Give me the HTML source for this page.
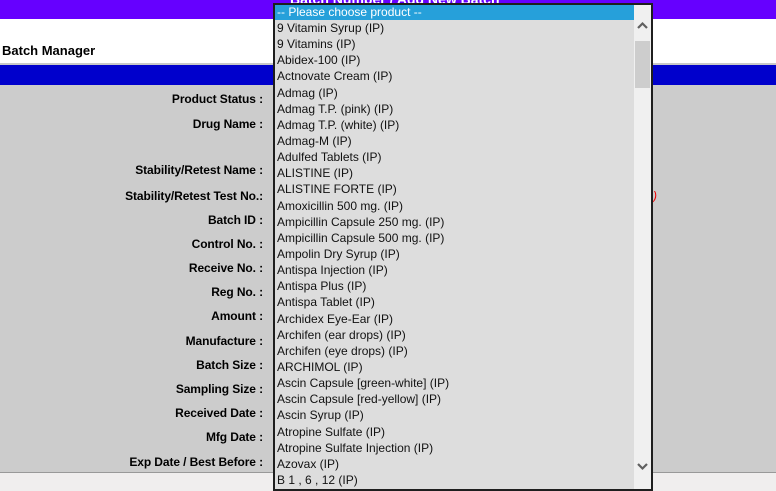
<!DOCTYPE html>
<html><head><style>
body{margin:0;width:776px;height:491px;overflow:hidden;background:#ccc;font-family:"Liberation Sans",Arial,sans-serif;position:relative}
.a{position:absolute}
.lbl{position:absolute;right:513px;font-size:12px;font-weight:bold;color:#000;white-space:nowrap;line-height:14px;letter-spacing:-0.1px}
.dd{position:absolute;left:273px;top:3px;width:376px;height:484px;border:2px solid #1e1e1e;background:#ddd;overflow:hidden}
.it{height:16.15px;line-height:17px;font-size:12px;padding-left:2px;color:#111;white-space:nowrap}
</style></head><body>
<div class="a" style="left:0;top:0;width:776px;height:19px;background:#6600ff"></div>
<div class="a" style="left:290px;top:-9px;color:#fff;font-weight:bold;font-size:14px">Batch Number / Add New Batch</div>
<div class="a" style="left:0;top:19px;width:776px;height:44px;background:#fff"></div>
<div class="a" style="left:2px;top:43px;font-size:13px;font-weight:bold">Batch Manager</div>
<div class="a" style="left:0;top:63px;width:776px;height:2px;background:#c8c8c8"></div>
<div class="a" style="left:0;top:65px;width:776px;height:20px;background:#0000cc"></div>
<div class="a" style="left:0;top:472px;width:776px;height:1px;background:#999"></div>
<div class="a" style="left:0;top:473px;width:776px;height:18px;background:#f0eeee"></div>
<div class="a" style="left:653px;top:189px;color:#e00;font-size:12px;font-style:italic">)</div>
<div class="lbl" style="top:92px">Product Status :</div>
<div class="lbl" style="top:117px">Drug Name :</div>
<div class="lbl" style="top:163px">Stability/Retest Name :</div>
<div class="lbl" style="top:189px">Stability/Retest Test No.:</div>
<div class="lbl" style="top:213px">Batch ID :</div>
<div class="lbl" style="top:237px">Control No. :</div>
<div class="lbl" style="top:261px">Receive No. :</div>
<div class="lbl" style="top:285px">Reg No. :</div>
<div class="lbl" style="top:309px">Amount :</div>
<div class="lbl" style="top:334px">Manufacture :</div>
<div class="lbl" style="top:358px">Batch Size :</div>
<div class="lbl" style="top:382px">Sampling Size :</div>
<div class="lbl" style="top:406px">Received Date :</div>
<div class="lbl" style="top:430px">Mfg Date :</div>
<div class="lbl" style="top:455px">Exp Date / Best Before :</div>
<div class="dd">
<div style="width:359px">
<div class="it" style="background:#26a0da;color:#fff;height:15px;line-height:15px">-- Please choose product --</div>
<div class="it">9 Vitamin Syrup (IP)</div>
<div class="it">9 Vitamins (IP)</div>
<div class="it">Abidex-100 (IP)</div>
<div class="it">Actnovate Cream (IP)</div>
<div class="it">Admag (IP)</div>
<div class="it">Admag T.P. (pink) (IP)</div>
<div class="it">Admag T.P. (white) (IP)</div>
<div class="it">Admag-M (IP)</div>
<div class="it">Adulfed Tablets (IP)</div>
<div class="it">ALISTINE (IP)</div>
<div class="it">ALISTINE FORTE (IP)</div>
<div class="it">Amoxicillin 500 mg. (IP)</div>
<div class="it">Ampicillin Capsule 250 mg. (IP)</div>
<div class="it">Ampicillin Capsule 500 mg. (IP)</div>
<div class="it">Ampolin Dry Syrup (IP)</div>
<div class="it">Antispa Injection (IP)</div>
<div class="it">Antispa Plus (IP)</div>
<div class="it">Antispa Tablet (IP)</div>
<div class="it">Archidex Eye-Ear (IP)</div>
<div class="it">Archifen (ear drops) (IP)</div>
<div class="it">Archifen (eye drops) (IP)</div>
<div class="it">ARCHIMOL (IP)</div>
<div class="it">Ascin Capsule [green-white] (IP)</div>
<div class="it">Ascin Capsule [red-yellow] (IP)</div>
<div class="it">Ascin Syrup (IP)</div>
<div class="it">Atropine Sulfate (IP)</div>
<div class="it">Atropine Sulfate Injection (IP)</div>
<div class="it">Azovax (IP)</div>
<div class="it">B 1 , 6 , 12 (IP)</div>
</div>
<div class="a" style="left:359px;top:0;width:17px;height:484px;background:#f0f0f0">
<svg class="a" style="left:2px;top:16px" width="13" height="10"><path d="M2 7 L6.5 2.5 L11 7" stroke="#606060" stroke-width="2.2" fill="none"/></svg>
<div class="a" style="left:1px;top:36px;width:15px;height:47px;background:#cdcdcd"></div>
<svg class="a" style="left:2px;top:456px" width="13" height="10"><path d="M2 3 L6.5 7.5 L11 3" stroke="#606060" stroke-width="2.2" fill="none"/></svg>
</div>
</div>
</body></html>
